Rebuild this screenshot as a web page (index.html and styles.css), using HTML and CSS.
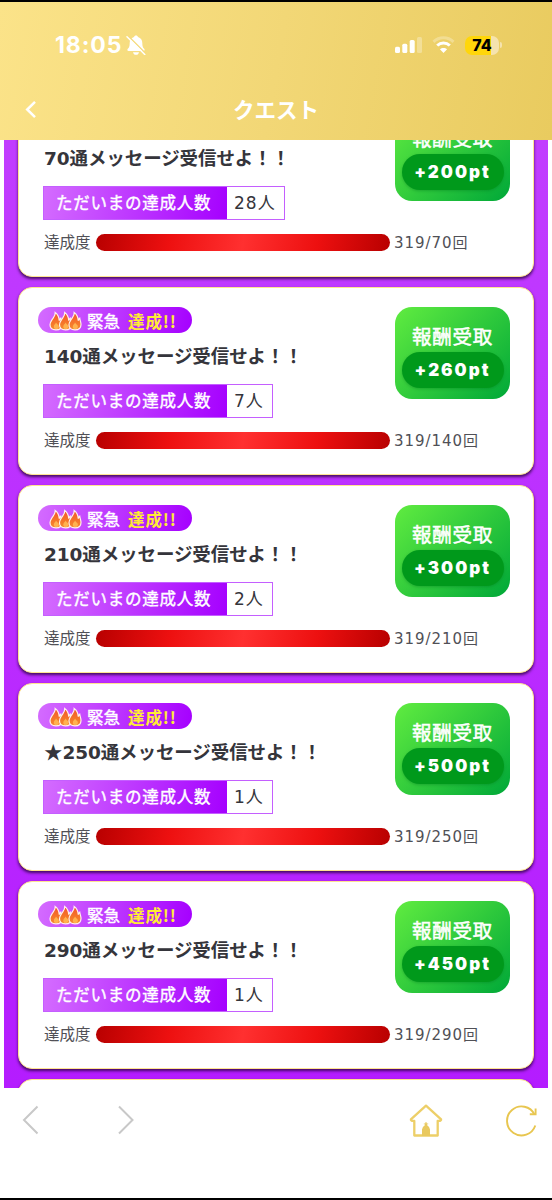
FILE: index.html
```html
<!DOCTYPE html>
<html lang="ja">
<head>
<meta charset="utf-8">
<title>クエスト</title>
<link rel="stylesheet" href="styles.css">
</head>
<body>
<svg class="defs" aria-hidden="true">
  <defs>
    <linearGradient id="fire" x1="0" y1="0" x2="0" y2="1"><stop offset="0" stop-color="#f2552c"/><stop offset=".55" stop-color="#f5742a"/><stop offset="1" stop-color="#f58a2e"/></linearGradient>
    <symbol id="flame" viewBox="0 0 14 20">
      <path d="M6.200 1.500C6.600 4.500 4.800 6 3.200 8.300C1.900 10.200 1 11.600 1 13.800C1 17 3.600 18.900 7 18.900C10.600 18.900 13 16.800 13 13.500C13 11 12 9.300 11.700 7.200C10.900 7.900 10.500 8.700 10.300 9.600C10 6.200 8.800 3.200 6.200 1.500Z" fill="url(#fire)" stroke="#fff0ec" stroke-width="1.200"/>
      <path d="M7 11.500C6.800 13 4.800 13.500 4.800 15.700C4.800 17.200 5.700 18 7.100 18C9 18 10 17 9.900 15.400C9.800 13.500 7.600 13.300 7 11.500Z" fill="#ffb24e"/>
    </symbol>
    <symbol id="flames" viewBox="0 0 33 20">
      <use href="#flame" x="0" y="0" width="14" height="20"/>
      <use href="#flame" x="9.500" y="0" width="14" height="20"/>
      <use href="#flame" x="19" y="0" width="14" height="20"/>
    </symbol>
  </defs>
</svg>
<div class="screen">
  <header class="header">
    <div class="status">
      <div class="status-left">
        <span class="time">18:05</span>
        <svg class="bell" viewBox="0 0 20 20"><path d="M10 .4C11.100 .4 11.800 1.100 12 2C14.900 2.800 16.300 5.200 16.300 8C16.300 11.600 17 12.600 18.200 13.800C19 14.700 18.700 16 17.400 16H2.600C1.300 16 1 14.700 1.800 13.800C3 12.600 3.700 11.600 3.700 8C3.700 5.200 5.100 2.800 8 2C8.200 1.100 8.900 .4 10 .4Z" fill="#fff"/><path d="M7 17.200H13C12.700 18.900 11.600 19.800 10 19.800S7.300 18.900 7 17.200Z" fill="#fff"/><path d="M2.200 1L20 18.800" stroke="#f5db7e" stroke-width="1.600"/><path d="M1 1.800L18.800 19.500" stroke="#fff" stroke-width="1.500" stroke-linecap="round"/></svg>
      </div>
      <div class="status-right">
        <svg class="signal" viewBox="0 0 28 18"><g fill="#fff"><rect x="0" y="10.700" width="5" height="6.300" rx="1.500"/><rect x="7.300" y="7.700" width="5" height="9.300" rx="1.500"/><rect x="14.700" y="4" width="5" height="13" rx="1.500"/><rect x="22" y="1" width="5" height="16" rx="1.500" opacity=".3"/></g></svg>
        <svg class="wifi" viewBox="0 0 23 18"><g fill="none" stroke="#fff" stroke-width="3"><path d="M1.500 5.800C7.200.4 15.800.4 21.500 5.800" opacity=".28"/><path d="M5.200 9.500C8.800 6.200 14.200 6.200 17.800 9.500"/></g><path d="M11.500 17L7.900 13.300C9.900 11.500 13.100 11.500 15.100 13.300Z" fill="#fff"/></svg>
        <div class="battery"><span class="battery-body">74</span><span class="battery-cap"></span></div>
      </div>
    </div>
    <div class="nav">
      <svg class="back" viewBox="0 0 12 19"><path d="M10 1.800L2.200 9.500L10 17.200" fill="none" stroke="#fff" stroke-width="2.500"/></svg>
      <h1 class="title">クエスト</h1>
      <span class="nav-end"></span>
    </div>
  </header>

  <main class="list">
    <article class="card">
      <div class="info">
        <div class="badge"><svg class="flames"><use href="#flames"/></svg><span>緊急</span><span class="done">達成!!</span></div>
        <h2 class="name">70通メッセージ受信せよ！！</h2>
        <div class="people"><span class="people-label">ただいまの達成人数</span><span class="people-value">28人</span></div>
      </div>
      <div class="claim"><span class="claim-label">報酬受取</span><span class="points">+200pt</span></div>
      <div class="progress"><span class="progress-label">達成度</span><span class="bar"></span><span class="count">319/70回</span></div>
    </article>
    <article class="card">
      <div class="info">
        <div class="badge"><svg class="flames"><use href="#flames"/></svg><span>緊急</span><span class="done">達成!!</span></div>
        <h2 class="name">140通メッセージ受信せよ！！</h2>
        <div class="people"><span class="people-label">ただいまの達成人数</span><span class="people-value">7人</span></div>
      </div>
      <div class="claim"><span class="claim-label">報酬受取</span><span class="points">+260pt</span></div>
      <div class="progress"><span class="progress-label">達成度</span><span class="bar"></span><span class="count">319/140回</span></div>
    </article>
    <article class="card">
      <div class="info">
        <div class="badge"><svg class="flames"><use href="#flames"/></svg><span>緊急</span><span class="done">達成!!</span></div>
        <h2 class="name">210通メッセージ受信せよ！！</h2>
        <div class="people"><span class="people-label">ただいまの達成人数</span><span class="people-value">2人</span></div>
      </div>
      <div class="claim"><span class="claim-label">報酬受取</span><span class="points">+300pt</span></div>
      <div class="progress"><span class="progress-label">達成度</span><span class="bar"></span><span class="count">319/210回</span></div>
    </article>
    <article class="card">
      <div class="info">
        <div class="badge"><svg class="flames"><use href="#flames"/></svg><span>緊急</span><span class="done">達成!!</span></div>
        <h2 class="name"><span class="star">★</span>250通メッセージ受信せよ！！</h2>
        <div class="people"><span class="people-label">ただいまの達成人数</span><span class="people-value">1人</span></div>
      </div>
      <div class="claim"><span class="claim-label">報酬受取</span><span class="points">+500pt</span></div>
      <div class="progress"><span class="progress-label">達成度</span><span class="bar"></span><span class="count">319/250回</span></div>
    </article>
    <article class="card">
      <div class="info">
        <div class="badge"><svg class="flames"><use href="#flames"/></svg><span>緊急</span><span class="done">達成!!</span></div>
        <h2 class="name">290通メッセージ受信せよ！！</h2>
        <div class="people"><span class="people-label">ただいまの達成人数</span><span class="people-value">1人</span></div>
      </div>
      <div class="claim"><span class="claim-label">報酬受取</span><span class="points">+450pt</span></div>
      <div class="progress"><span class="progress-label">達成度</span><span class="bar"></span><span class="count">319/290回</span></div>
    </article>
    <article class="card"></article>
  </main>

  <footer class="toolbar">
    <svg class="chev" viewBox="0 0 18 30"><path d="M15.500 1.500L2 15L15.500 28.500" fill="none" stroke="#c8c8c8" stroke-width="2"/></svg>
    <svg class="chev next" viewBox="0 0 18 30"><path d="M2 1.500L15.500 15L2 28.500" fill="none" stroke="#c8c8c8" stroke-width="2"/></svg>
    <svg class="home" viewBox="0 0 34 34"><path d="M17 1.700L1.900 15.300Q1.500 17.300 5.300 16.800V31.500H28.700V16.800Q32.500 17.300 32.100 15.300Z" fill="none" stroke="#edcf68" stroke-width="2.300" stroke-linejoin="round"/><path d="M13 32V25.500Q13.500 22.500 15.800 21.300V20.300H14.800V19.400H16.300V18.200H17.700V19.400H19.200V20.300H18.200V21.300Q20.500 22.500 21 25.500V32Z" fill="#e9c95f"/></svg>
    <svg class="reload" viewBox="0 0 32 34"><g fill="none" stroke="#e8c650" stroke-width="1.900"><path d="M29.300 21.500A14.500 14.500 0 1 1 28.600 10.600"/><path d="M29.600 4.500V10.200H23.800"/></g></svg>
  </footer>
</div>
</body>
</html>
```
FILE: styles.css
```css
* { box-sizing: border-box; }
body { margin: 0; background: #000; font-family: "DejaVu Sans", "Noto Sans CJK JP", sans-serif; color: #35353b; }
.defs { position: absolute; width: 0; height: 0; }
.screen { height: 1200px; padding: 2px 0; display: flex; flex-direction: column; overflow: hidden; }
.header { height: 138px; flex: none; background: linear-gradient(100deg, #fbe389 0%, #f2d776 50%, #e9cb5f 100%); color: #fff; }
.status { display: flex; justify-content: space-between; height: 86px; padding: 0 50px 0 55px; align-items: center; }
.status-left, .status-right { display: flex; align-items: center; }
.time { font: 700 23px/26px Inter, sans-serif; letter-spacing: .9px; }
.bell { width: 20px; height: 20px; margin-left: 4px; }
.signal { width: 28px; height: 18px; }
.wifi { width: 23px; height: 18px; margin-left: 9px; }
.battery { display: flex; align-items: center; margin-left: 10px; gap: 1px; }
.battery-body { width: 34px; height: 19px; border-radius: 7px; background: linear-gradient(90deg, #ffd60a 76%, #f5e3ae 76%); color: #000; font: 800 16px/19px Inter, sans-serif; text-align: center; }
.battery-cap { width: 2px; height: 6px; border-radius: 0 2px 2px 0; background: #f5e3ae; }
.nav { display: flex; align-items: center; justify-content: space-between; height: 42px; padding: 0 25px; }
.back, .nav-end { width: 12px; height: 19px; }
.title { margin: 0; font: 700 21.500px/32px "Noto Sans CJK JP", sans-serif; }

.list { height: 948px; flex: none; overflow: hidden; margin: 0; padding: 0 14px; border: solid #fff; border-width: 0 4px; background: linear-gradient(#c13dff, #b41cff); display: flex; flex-direction: column; gap: 10px; }
.card { height: 188px; flex: none; display: grid; grid-template-columns: 1fr 115px; grid-template-rows: 110px 17px; row-gap: 15px; padding: 19px 23px 0 19px; border: 1px solid #ffe391; border-radius: 14px; background: #fff; box-shadow: 0 2px 3px rgba(30, 0, 50, .75); }
.card:first-child { margin-top: -51.500px; }
.info { display: flex; flex-direction: column; align-items: flex-start; }
.badge { display: flex; align-items: center; width: 154px; height: 26px; border-radius: 13px; padding-left: 11px; background: linear-gradient(100deg, #d46cff, #a500ff); color: #fff; font: 400 16.500px/26px "Noto Sans CJK JP", sans-serif; -webkit-text-stroke: .4px #fff; }
.badge span { position: relative; top: 1px; }
.flames { width: 33px; height: 20px; margin: 2px 5px 0 0; }
.badge .done { margin-left: 8px; color: #ffec35; font-weight: 700; letter-spacing: .9px; -webkit-text-stroke: 0; }
.name { margin: 9px 0 0 6px; font-size: 18.500px; line-height: 30px; height: 30px; letter-spacing: -.1px; white-space: nowrap; font-weight: 700; }
.star { font-family: "Noto Sans CJK JP", sans-serif; line-height: 1; }
.people { display: flex; height: 34px; margin: 12px 0 0 5px; border: 1px solid #c45fff; line-height: 32px; }
.people-label { width: 183px; padding-left: 12px; background: linear-gradient(100deg, #d46cff, #a500ff); color: #fff; font-family: "Noto Sans CJK JP", sans-serif; font-weight: 400; font-size: 16.500px; line-height: 30px; letter-spacing: .75px; white-space: nowrap; -webkit-text-stroke: .4px #fff; }
.people-value { padding: 0 8px 0 7px; font-size: 17px; letter-spacing: 1px; }
.claim { height: 92px; border-radius: 17px; padding: 14px 6px 0; background: linear-gradient(135deg, #60ec40, #00a838); color: #fff; display: flex; flex-direction: column; align-items: center; }
.claim-label { font: 400 19.500px/29px "Noto Sans CJK JP", sans-serif; letter-spacing: .8px; margin-bottom: 2px; -webkit-text-stroke: .5px #fff; }
.points { width: 102px; height: 36px; border-radius: 18px; background: #00991b; text-align: center; font: 900 17px/37px Inter, sans-serif; letter-spacing: 2px; box-shadow: 0 1px 3px rgba(0, 120, 30, .4); }
.progress { grid-column: 1 / -1; display: flex; align-items: center; padding-left: 6px; margin-right: -20px; line-height: 17px; white-space: nowrap; color: #505056; }
.progress-label { width: 52px; font: 400 15.500px/17px "Noto Sans CJK JP", sans-serif; margin-bottom: 2px; }
.bar { width: 294px; height: 17px; border-radius: 9px; background: linear-gradient(100deg, #b80000 0%, #ed1010 25%, #ff3030 50%, #ed1010 75%, #b80000 100%); }
.count { margin: 2px 0 0 4px; font-size: 15px; letter-spacing: .95px; }

.toolbar { flex: 1; display: flex; align-items: flex-start; background: #fff; padding: 17px 14px 0 22px; }
.chev { width: 18px; height: 30px; }
.next { margin-left: 77px; }
.home { width: 34px; height: 34px; margin: -1px 0 0 274px; }
.reload { width: 32px; height: 34px; margin: -1px 0 0 auto; }
```
